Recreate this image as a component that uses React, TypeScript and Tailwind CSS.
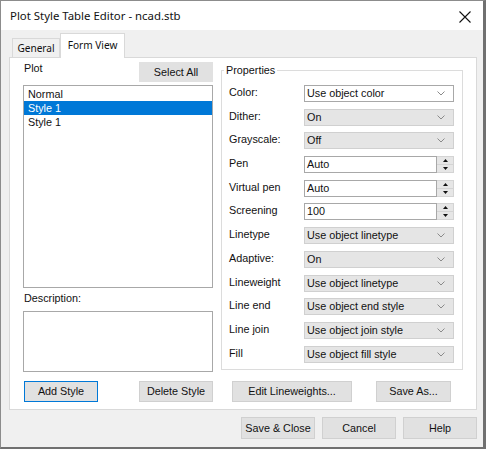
import type { ReactNode } from 'react'

type Row = {
  label: string
  kind: 'combo' | 'comboWhite' | 'spin'
  value: string
}

const rows: Row[] = [
  { label: 'Color:', kind: 'comboWhite', value: 'Use object color' },
  { label: 'Dither:', kind: 'combo', value: 'On' },
  { label: 'Grayscale:', kind: 'combo', value: 'Off' },
  { label: 'Pen', kind: 'spin', value: 'Auto' },
  { label: 'Virtual pen', kind: 'spin', value: 'Auto' },
  { label: 'Screening', kind: 'spin', value: '100' },
  { label: 'Linetype', kind: 'combo', value: 'Use object linetype' },
  { label: 'Adaptive:', kind: 'combo', value: 'On' },
  { label: 'Lineweight', kind: 'combo', value: 'Use object linetype' },
  { label: 'Line end', kind: 'combo', value: 'Use object end style' },
  { label: 'Line join', kind: 'combo', value: 'Use object join style' },
  { label: 'Fill', kind: 'combo', value: 'Use object fill style' },
]

const plotStyles = ['Normal', 'Style 1', 'Style 1']

function Chevron() {
  return (
    <svg width="8" height="5" viewBox="0 0 8 5" className="shrink-0">
      <polyline points="0.5,0.5 4,4 7.5,0.5" fill="none" stroke="#8a8a8a" strokeWidth="1" />
    </svg>
  )
}

function Btn({ children, w, focused }: { children: ReactNode; w: string; focused?: boolean }) {
  return (
    <div
      className={`${w} h-[21px] flex items-center justify-center bg-[#e1e1e1] border ${
        focused ? 'border-[#0078d7]' : 'border-[#d0d0d0]'
      }`}
    >
      {children}
    </div>
  )
}

function Control({ row }: { row: Row }) {
  if (row.kind === 'spin') {
    return (
      <div className="flex h-[17px] w-[150px]">
        <div className="flex-1 flex items-center pl-[2px] bg-white border border-[#a8a8a8]">
          {row.value}
        </div>
        <div className="w-[17px] flex flex-col border border-l-0 border-[#d4d4d4]">
          <div className="flex-1 flex items-center justify-center bg-[#e6e6e6] border-b border-[#d4d4d4]">
            <svg width="5" height="3" viewBox="0 0 5 3">
              <polygon points="0,3 2.5,0 5,3" fill="#111" />
            </svg>
          </div>
          <div className="flex-1 flex items-center justify-center bg-[#e6e6e6]">
            <svg width="5" height="3" viewBox="0 0 5 3">
              <polygon points="0,0 2.5,3 5,0" fill="#111" />
            </svg>
          </div>
        </div>
      </div>
    )
  }
  const white = row.kind === 'comboWhite'
  return (
    <div
      className={`flex h-[17px] w-[150px] items-center justify-between pl-[2px] pr-[8px] border ${
        white ? 'bg-white border-[#a8a8a8]' : 'bg-[#e5e5e5] border-[#d0d0d0]'
      }`}
    >
      <span>{row.value}</span>
      <Chevron />
    </div>
  )
}

export default function App() {
  return (
    <div className="w-[486px] h-[449px] flex flex-col bg-[#f0f0f0] border-l border-t border-r-[3px] border-b-[2px] border-l-[#8c8c8c] border-t-[#8c8c8c] border-r-[#707070] border-b-[#707070] font-['Liberation_Sans',Arial,sans-serif] text-[10.8px] leading-[13px] text-[#111]">
      {/* TITLE */}
      <div className="h-[29px] shrink-0 bg-white flex items-center justify-between pl-[9px] pr-[12px]">
        <span className="font-['Noto_Sans',sans-serif] text-[11.4px] leading-[16px] pt-[1px]">
          Plot Style Table Editor - ncad.stb
        </span>
        <svg width="12" height="12" viewBox="0 0 12 12" className="mt-[3px]">
          <path d="M0.5 0.5 L11.5 11.5 M11.5 0.5 L0.5 11.5" stroke="#111" strokeWidth="1.1" />
        </svg>
      </div>

      <div className="flex-1 flex flex-col pl-[8px] pr-[6px]">
        {/* TABS */}
        <div className="h-[27px] shrink-0 flex items-end pl-[3px] font-['Noto_Sans',sans-serif] text-[10.1px]">
          <div className="h-[19px] w-[48px] flex items-center justify-center bg-[#f0f0f0] border border-b-0 border-[#d9d9d9]">
            General
          </div>
          <div className="relative z-10 -mb-px h-[25px] w-[65px] flex items-start justify-center pt-[5px] bg-white border border-b-0 border-[#d9d9d9]">
            Form View
          </div>
        </div>

        {/* PAGE */}
        <div className="h-[353px] shrink-0 flex bg-white border border-[#d9d9d9] pl-[13px]">
          {/* LEFT */}
          <div className="w-[190px] flex flex-col">
            <div className="mt-[4px] h-[20px] flex items-start justify-between">
              <span className="pl-[1px]">Plot</span>
              <div className="w-[74px] h-[20px] flex items-center justify-center bg-[#e1e1e1] border border-[#e1e1e1]">
                Select All
              </div>
            </div>
            <div className="mt-[3px] h-[203px] border border-[#a8a8a8] pt-[1px]">
              {plotStyles.map((s, i) => (
                <div
                  key={i}
                  className={`h-[14px] flex items-center pl-[4px] ${
                    i === 1 ? 'bg-[#0078d7] text-white' : ''
                  }`}
                >
                  {s}
                </div>
              ))}
            </div>
            <span className="mt-[4px] pl-[1px]">Description:</span>
            <div className="mt-[6px] h-[61px] border border-[#a8a8a8]" />
            <div className="mt-[9px] flex justify-between pl-[1px]">
              <Btn w="w-[74px]" focused>
                Add Style
              </Btn>
              <Btn w="w-[74px]">Delete Style</Btn>
            </div>
          </div>

          {/* RIGHT */}
          <div className="ml-[8px] w-[242px] flex flex-col">
            <fieldset className="mt-[5.5px] h-[306.5px] border border-[#dcdcdc] pl-[7px] pr-[8px] pt-[8.5px]">
              <legend className="-ml-[5px] px-[2px] leading-[13px]">Properties</legend>
              <div className="flex flex-col gap-[6.7px]">
                {rows.map((r) => (
                  <div key={r.label} className="h-[17px] flex items-center">
                    <span className="w-[75px] shrink-0 -mt-[2px]">{r.label}</span>
                    <Control row={r} />
                  </div>
                ))}
              </div>
            </fieldset>
            <div className="mt-[11px] flex gap-[24px] pl-[11px]">
              <Btn w="w-[120px]">Edit Lineweights...</Btn>
              <Btn w="w-[75px]">Save As...</Btn>
            </div>
          </div>
        </div>

        {/* FOOTER */}
        <div className="mt-[7px] flex justify-end gap-[7px]">
          <div className="w-[74px] h-[22px] flex items-center justify-center bg-[#e1e1e1] border border-[#d0d0d0]">
            Save &amp; Close
          </div>
          <div className="w-[74px] h-[22px] flex items-center justify-center bg-[#e1e1e1] border border-[#d0d0d0]">
            Cancel
          </div>
          <div className="w-[74px] h-[22px] flex items-center justify-center bg-[#e1e1e1] border border-[#d0d0d0]">
            Help
          </div>
        </div>
      </div>
    </div>
  )
}
